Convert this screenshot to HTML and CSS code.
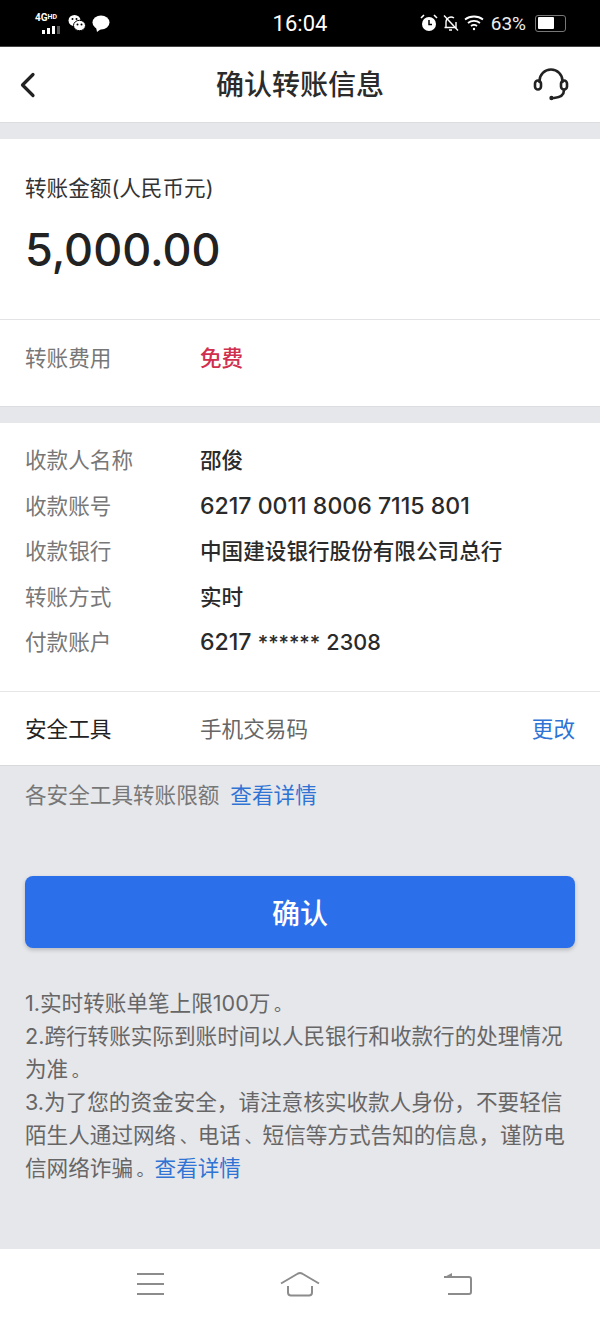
FILE: index.html
```html
<!DOCTYPE html>
<html lang="zh-CN">
<head>
<meta charset="utf-8">
<title>确认转账信息</title>
<link rel="stylesheet" href="styles.css">
</head>
<body>
<div class="page">
  <div class="status">
    <div class="status-left">
      <div class="net">
        <span class="net-text">4G<small>HD</small></span>
        <svg class="net-bars" width="20" height="8" viewBox="0 0 20 8"><rect x="0" y="4" width="3" height="4" fill="#fff"/><rect x="5" y="2" width="3" height="6" fill="#fff"/><rect x="10" y="0" width="3" height="8" fill="#fff"/><rect x="15" y="0" width="3" height="8" fill="#555"/></svg>
      </div>
      <svg class="ic-wechat" width="18" height="18" viewBox="0 0 18 18"><ellipse cx="6.500" cy="6.500" rx="6" ry="5.500" fill="#fff"/><ellipse cx="11.500" cy="11.500" rx="6" ry="5.200" fill="#fff" stroke="#000" stroke-width="1"/><circle cx="4.500" cy="5" r="1" fill="#000"/><circle cx="8.500" cy="5" r="1" fill="#000"/><circle cx="9.500" cy="10.500" r="1" fill="#000"/><circle cx="13.500" cy="10.500" r="1" fill="#000"/></svg>
      <svg class="ic-msg" width="18" height="17" viewBox="0 0 18 17"><ellipse cx="9" cy="7.500" rx="8.500" ry="7" fill="#fff"/><path d="M4 12l1 5 4-3z" fill="#fff"/></svg>
    </div>
    <div class="status-time">16:04</div>
    <div class="status-right">
      <svg width="18" height="18" viewBox="0 0 18 18"><circle cx="9" cy="10" r="7" fill="#fff"/><path d="M9 6v4.500h3" fill="none" stroke="#000" stroke-width="1.500"/><path d="M1 4l3-3M17 4l-3-3" stroke="#fff" stroke-width="1.600"/></svg>
      <svg width="18" height="18" viewBox="0 0 18 18" fill="none" stroke="#fff" stroke-width="1.400"><path d="M4 13.500V8a5 5 0 0 1 8-4M14 8v5.500H2.500M7 16h3"/><path d="M2 1.500l14 15"/></svg>
      <svg width="20" height="16" viewBox="0 0 20 16" fill="none" stroke="#fff" stroke-width="1.800"><path d="M1 4.500c5-4 13-4 18 0M4 8c3.500-2.800 8.500-2.800 12 0M7 11c1.800-1.300 4.200-1.300 6 0"/><circle cx="10" cy="14" r="1.200" fill="#fff" stroke="none"/></svg>
      <span class="batt-text">63%</span>
      <div class="batt"><div class="batt-fill"></div></div>
    </div>
  </div>

  <header class="nav">
    <svg class="nav-back" width="18" height="26" viewBox="0 0 18 26"><path d="M14 2.500L3.500 13 14 23.500" fill="none" stroke="#222" stroke-width="3.200" stroke-linecap="round" stroke-linejoin="round"/></svg>
    <h1 class="nav-title">确认转账信息</h1>
    <svg class="nav-help" width="36" height="34" viewBox="0 0 36 34" fill="none" stroke="#222" stroke-width="2.600" stroke-linecap="round"><path d="M6.500 14V13a11.500 11.500 0 0 1 23 0v1"/><rect x="2" y="12.500" width="6" height="9" rx="3"/><rect x="28" y="12.500" width="6" height="9" rx="3"/><path d="M31 22c0 5-4 7.500-10 8"/><circle cx="18.500" cy="30" r="2.200" fill="#222" stroke="none"/></svg>
  </header>

  <section class="card amount-card">
    <div class="amount-label">转账金额(人民币元)</div>
    <div class="amount-value">5,000.00</div>
  </section>
  <section class="card fee-card">
    <span class="key">转账费用</span>
    <span class="fee">免费</span>
  </section>

  <section class="card detail-card">
    <div class="row"><span class="key">收款人名称</span><span class="val">邵俊</span></div>
    <div class="row"><span class="key">收款账号</span><span class="val num">6217 0011 8006 7115 801</span></div>
    <div class="row"><span class="key">收款银行</span><span class="val">中国建设银行股份有限公司总行</span></div>
    <div class="row"><span class="key">转账方式</span><span class="val">实时</span></div>
    <div class="row"><span class="key">付款账户</span><span class="val num">6217 <span class="stars">******</span> <span class="tail">2308</span></span></div>
  </section>
  <section class="card tool-card">
    <span class="key key-dark">安全工具</span>
    <span class="tool-val">手机交易码</span>
    <a class="link tool-link">更改</a>
  </section>

  <div class="limit"><span>各安全工具转账限额</span><a class="link">查看详情</a></div>

  <button class="confirm">确认</button>

  <div class="notes">
    <p>1.实时转账单笔上限100万<span class="punct">。</span></p>
    <p>2.跨行转账实际到账时间以人民银行和收款行的处理情况<br>为准<span class="punct">。</span></p>
    <p>3.为了您的资金安全，请注意核实收款人身份，不要轻信<br>陌生人通过网络<span class="punct">、</span>电话<span class="punct">、</span>短信等方式告知的信息，谨防电<br>信网络诈骗<span class="punct">。</span><a class="link">查看详情</a></p>
  </div>

  <footer class="softkeys">
    <svg width="30" height="24" viewBox="0 0 30 24" fill="none" stroke="#8c8c8c" stroke-width="2"><path d="M1 2h27M1 12h27M1 22h27"/></svg>
    <svg class="key-home" width="40" height="26" viewBox="0 0 40 26" fill="none" stroke="#8c8c8c" stroke-width="2" stroke-linejoin="round"><path d="M1 12.500L18 2.500q2-1 4 0L39 12.500"/><path d="M8 15v6.500q0 3 3 3h18q3 0 3-3V15"/></svg>
    <svg width="30" height="24" viewBox="0 0 30 24" fill="none" stroke="#8c8c8c" stroke-width="2"><path d="M1 5h25q2 0 2 2v13q0 2-2 2H5"/><path d="M9 1L1.500 5 9 6z" fill="#8c8c8c" stroke="none"/></svg>
  </footer>
</div>
</body>
</html>
```

FILE: styles.css
```css
* { box-sizing: border-box; margin: 0; padding: 0; }
html, body { background: #e6e7eb; }
body { font-family: Inter, "Noto Sans CJK SC", sans-serif; color: #222; }
.page { width: 600px; height: 1319px; display: flex; flex-direction: column; overflow: hidden; }

.status { height: 47px; background: #000; color: #fff; display: flex; align-items: center; justify-content: space-between; padding: 0 34px 0 35px; position: relative; border-bottom: 1px solid #444; font-family: Roboto, sans-serif; }
.status-left { display: flex; align-items: center; gap: 6px; width: 120px; }
.net { width: 27px; display: flex; flex-direction: column; gap: 3px; line-height: 1; }
.net-text { font-size: 10px; font-weight: 700; line-height: 10px; white-space: nowrap; }
.net-text small { font-size: 7px; vertical-align: 2px; }
.net-bars { margin-left: 7px; }
.status-time { position: absolute; left: 0; right: 0; text-align: center; font-size: 22px; line-height: 47px; }
.status-right { display: flex; align-items: center; gap: 4px; }
.batt-text { font-size: 19px; color: #eee; margin-left: 3px; }
.batt { width: 31px; height: 17px; border: 1.500px solid #777; border-radius: 3px; padding: 1.500px; margin-left: 5px; }
.batt-fill { width: 63%; height: 100%; background: #fff; border-radius: 1px; }

.nav { height: 76px; flex: none; background: #fff; border-bottom: 1px solid #dcdde0; display: flex; align-items: center; justify-content: space-between; padding: 0 31px 0 19px; position: relative; }
.nav-title { position: absolute; left: 0; right: 0; text-align: center; font-size: 28px; line-height: 78px; font-weight: 500; color: #2b2b2b; }

.card { background: #fff; }
.amount-card { margin-top: 16px; height: 181px; padding: 35px 25px 0; border-bottom: 1px solid #e3e3e6; }
.amount-label { font-size: 21.600px; line-height: 28px; color: #333; }
.amount-value { font-size: 45px; line-height: 60px; margin-top: 18px; font-weight: 500; color: #222; }
.fee-card { height: 87px; padding: 23px 25px 0; display: flex; align-items: flex-start; border-bottom: 1px solid #dcdde0; line-height: 30px; }
.key { font-size: 21.600px; color: #777; width: 175px; flex: none; }
.key-dark { color: #222; }
.fee { font-size: 21.600px; font-weight: 500; color: #d0304e; }

.detail-card { margin-top: 16px; height: 269px; padding: 13px 25px 0; border-bottom: 1px solid #e6e6e8; }
.row { height: 45.500px; display: flex; align-items: center; }
.val { font-size: 21.600px; font-weight: 500; color: #2a2a2a; }
.num { font-size: 23.100px; padding-top: 3px; }
.stars { font-size: 20px; }
.tail { font-size: 21.600px; }
.tool-card { height: 74px; padding: 0 25px 2px; display: flex; align-items: center; border-bottom: 1px solid #d8d9dc; }
.tool-val { font-size: 21.600px; color: #666; flex: 1; }
.link { color: #2f74d4; font-size: 21.600px; }

.limit { height: 60px; padding: 14px 25px 0; font-size: 21.600px; line-height: 30px; color: #777; display: flex; gap: 11px; }

.confirm { margin: 50px 25px 0; height: 72px; flex: none; border: 0; border-radius: 8px; background: #2b6fea; color: #fff; font: 500 28px "Noto Sans CJK SC", sans-serif; box-shadow: 0 2px 4px rgba(0,0,0,.2); }

.notes { margin-top: 39px; padding: 0 25px; font-size: 21.600px; line-height: 33px; color: #666; flex: 1; }
.notes p { white-space: nowrap; }
.punct { font-size: 18px; line-height: 1; margin-left: 3.600px; }

.softkeys { height: 70px; flex: none; background: #fff; display: flex; align-items: center; padding: 0 127px 0 136px; justify-content: space-between; }
.key-home { margin-right: 10px; }
```
